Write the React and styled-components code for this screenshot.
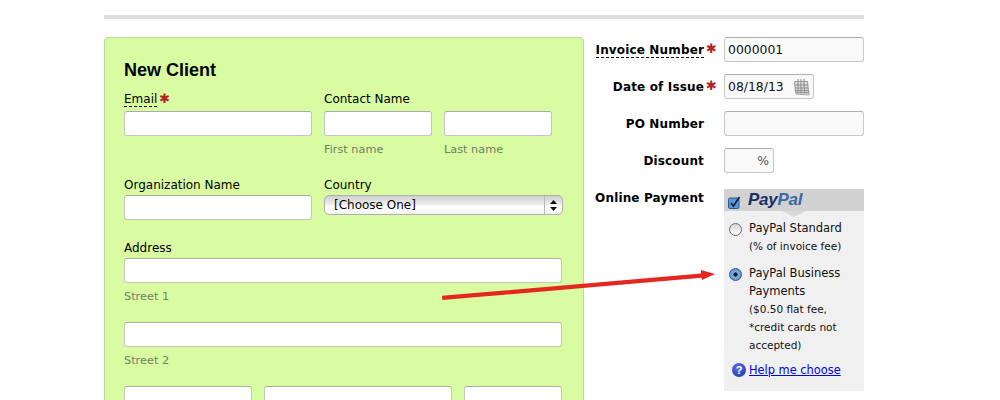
import React from "react";
import styled, { createGlobalStyle } from "styled-components";

const Global = createGlobalStyle`
  html, body { margin: 0; padding: 0; background: #fff; overflow: hidden; height: 400px; }
  body { font-family: "DejaVu Sans", sans-serif; color: #000; }
`;

const Page = styled.div`
  position: relative;
  width: 760px;
  height: 400px;
  margin-left: 104px;
  padding-top: 15px;
  box-sizing: border-box;
  overflow: hidden;
`;
const Rule = styled.div`
  height: 4px;
  background: #dedede;
  margin-bottom: 18px;
`;
const Columns = styled.div`
  display: flex;
  align-items: flex-start;
`;
const Card = styled.section`
  width: 480px;
  height: 420px;
  box-sizing: border-box;
  flex: none;
  background: #d9fca3;
  border: 1px solid #bfd79a;
  border-radius: 4px;
  padding: 21px 19px 0;
`;
const Title = styled.h2`
  margin: 0 0 11px;
  font: bold 18px/22px "Liberation Sans", sans-serif;
`;
const Row = styled.div`
  display: flex;
  gap: 12px;
  margin-bottom: ${(p) => p.$mb ?? 0}px;
`;
const Field = styled.div`
  display: flex;
  flex-direction: column;
  flex: none;
  width: ${(p) => p.$w}px;
`;
const Label = styled.label`
  display: block;
  font-size: 12px;
  line-height: 14px;
  height: 15px;
  margin-bottom: ${(p) => p.$mb ?? 2}px;
  white-space: nowrap;
`;
const Dashed = styled.span`
  border-bottom: 1px dashed #000;
`;
const Star = styled.span`
  color: #b3201f;
  font-size: 13px;
  line-height: 12px;
  margin-left: 2px;
`;
const TextBox = styled.div`
  box-sizing: border-box;
  width: ${(p) => (p.$w ? `${p.$w}px` : "100%")};
  height: 25px;
  flex: none;
  background: #fff;
  border: 1px solid #c4c4c4;
  border-top-color: #a9a9a9;
  border-radius: 3px;
`;
const Hint = styled.div`
  font-size: 11.3px;
  line-height: 14px;
  color: #6f7f60;
  margin-top: 7px;
  height: 14px;
`;
const Pair = styled.div`
  display: flex;
  gap: 12px;
`;
const SelectBox = styled.div`
  box-sizing: border-box;
  width: 239px;
  height: 20px;
  display: flex;
  align-items: center;
  border: 1px solid #b0b0b0;
  border-radius: 5px;
  background: linear-gradient(#cfcfcf 0%, #ececec 45%, #fff 60%, #f4f4f4 100%);
  font-size: 12px;
`;
const SelectValue = styled.span`
  flex: 1;
  padding-left: 9px;
`;
const SelectArrows = styled.span`
  width: 17px;
  height: 18px;
  border-left: 1px solid #b8b8b8;
  display: flex;
  align-items: center;
  justify-content: center;
`;
const Side = styled.aside`
  width: 280px;
  flex: none;
`;
const SideRow = styled.div`
  display: flex;
  align-items: ${(p) => (p.$top ? "flex-start" : "center")};
  height: ${(p) => p.$h ?? 25}px;
  margin-bottom: ${(p) => p.$mb ?? 12}px;
`;
const SideLabel = styled.div`
  width: 120px;
  margin-right: 20px;
  padding-top: 2px;
  flex: none;
  position: relative;
  text-align: right;
  font-size: 12px;
  font-weight: bold;
  letter-spacing: 0.15px;
  line-height: 15px;
  white-space: nowrap;
`;
const SideStar = styled.span`
  position: absolute;
  left: 122px;
  top: 0;
  color: #b3201f;
  font-size: 13px;
  font-weight: normal;
  line-height: 15px;
`;
const SideBox = styled.div`
  box-sizing: border-box;
  width: ${(p) => p.$w}px;
  height: 25px;
  background: #f9f9f9;
  border: 1px solid #c8c8c8;
  border-top-color: #acacac;
  border-radius: 3px;
  display: flex;
  align-items: center;
  justify-content: ${(p) => (p.$end ? "flex-end" : "space-between")};
  padding: 0 3px;
  font-size: 12.4px;
  color: #111;
`;
const Percent = styled.span`
  color: #555;
  padding-right: 1px;
`;
const Pay = styled.div`
  width: 140px;
  height: 202px;
  background: #f0f0f0;
  flex: none;
`;
const PayHead = styled.div`
  position: relative;
  height: 22px;
  background: #d2d2d2;
  display: flex;
  align-items: center;
  padding-left: 4px;
  gap: 7px;
  &::after {
    content: "";
    position: absolute;
    left: 58px;
    top: 22px;
    border-left: 12px solid transparent;
    border-right: 12px solid transparent;
    border-top: 6px solid #d8d8d8;
  }
`;
const Check = styled.span`
  width: 13px;
  height: 13px;
  display: block;
`;
const Logo = styled.span`
  font: italic bold 17px/20px "Liberation Sans", sans-serif;
  color: #1a2f66;
  letter-spacing: -0.25px;
  & > b { color: #3a6aa6; }
`;
const Options = styled.div`
  padding: 8px 0 0 5px;
`;
const Option = styled.div`
  display: flex;
  gap: 8px;
  margin-bottom: 9px;
`;
const Radio = styled.span`
  flex: none;
  box-sizing: border-box;
  width: 13px;
  height: 13px;
  margin-top: 4px;
  margin-right: -1px;
  border-radius: 50%;
  border: 1.5px solid ${(p) => (p.$on ? "#34587f" : "#6e6e6e")};
  background: ${(p) =>
    p.$on
      ? "radial-gradient(circle, #0c1d36 0 1.8px, #7fb0e4 2.4px, #4a85c6 100%)"
      : "linear-gradient(#d4d4d4, #fff)"};
`;
const OptionText = styled.div`
  font-size: 11.5px;
  line-height: 18px;
  color: #111;
`;
const Small = styled.div`
  font-size: 10.5px;
`;
const Help = styled.div`
  display: flex;
  align-items: center;
  gap: 3px;
  margin: 3px 0 0 8px;
  font-size: 11.4px;
`;
const HelpIcon = styled.span`
  width: 14px;
  height: 14px;
  border-radius: 50%;
  background: radial-gradient(circle at 40% 30%, #5a70e0, #1c2fa0);
  color: #fff;
  font: bold 11px/14px "Liberation Sans", sans-serif;
  text-align: center;
  flex: none;
`;
const HelpLink = styled.a`
  color: #0000ee;
  text-decoration: underline;
  cursor: pointer;
`;
const Arrow = styled.svg`
  position: absolute;
  left: 0;
  top: 0;
  pointer-events: none;
`;

const CalendarIcon = () => (
  <svg width="17" height="18" viewBox="0 0 17 18" fill="none">
    <path d="M3 12.5 L3 16 L16 17 L16 13" fill="#c9c9c9" stroke="#aaa" />
    <path d="M1.5 3.5 H14.5 L15.5 14.5 H2.5 Z" fill="#dedede" stroke="#9a9a9a" />
    <path d="M5 1v4M8 1v4M11 1v4M2 7h13M2.2 10h13.1M2.4 12.6h13M5 5v9.5M8 5v9.5M11 5l.6 9.5" stroke="#8d8d8d" />
  </svg>
);

export default function App() {
  return (
    <Page>
      <Global />
      <Rule />
      <Columns>
        <Card>
          <Title>New Client</Title>
          <Row $mb={21}>
            <Field $w={188}>
              <Label $mb={4}><Dashed>Email</Dashed><Star>✱</Star></Label>
              <TextBox />
            </Field>
            <Field $w={228}>
              <Label $mb={4}>Contact Name</Label>
              <Pair>
                <Field $w={108}><TextBox /><Hint>First name</Hint></Field>
                <Field $w={108}><TextBox /><Hint>Last name</Hint></Field>
              </Pair>
            </Field>
          </Row>
          <Row $mb={21}>
            <Field $w={188}>
              <Label>Organization Name</Label>
              <TextBox />
            </Field>
            <Field $w={239}>
              <Label>Country</Label>
              <SelectBox>
                <SelectValue>[Choose One]</SelectValue>
                <SelectArrows>
                  <svg width="7" height="11" viewBox="0 0 7 11">
                    <path d="M3.5 0 7 4H0ZM3.5 11 0 7h7Z" fill="#111" />
                  </svg>
                </SelectArrows>
              </SelectBox>
            </Field>
          </Row>
          <Row $mb={18}>
            <Field $w={438}>
              <Label>Address</Label>
              <TextBox />
              <Hint>Street 1</Hint>
            </Field>
          </Row>
          <Row $mb={18}>
            <Field $w={438}>
              <TextBox />
              <Hint>Street 2</Hint>
            </Field>
          </Row>
          <Row>
            <TextBox $w={128} />
            <TextBox $w={188} />
            <TextBox $w={98} />
          </Row>
        </Card>
        <Side>
          <SideRow>
            <SideLabel><Dashed>Invoice Number</Dashed><SideStar>✱</SideStar></SideLabel>
            <SideBox $w={140}>0000001</SideBox>
          </SideRow>
          <SideRow>
            <SideLabel>Date of Issue<SideStar>✱</SideStar></SideLabel>
            <SideBox $w={90}>08/18/13<CalendarIcon /></SideBox>
          </SideRow>
          <SideRow>
            <SideLabel>PO Number</SideLabel>
            <SideBox $w={140} />
          </SideRow>
          <SideRow $mb={16}>
            <SideLabel>Discount</SideLabel>
            <SideBox $w={50} $end><Percent>%</Percent></SideBox>
          </SideRow>
          <SideRow $top $h={202}>
            <SideLabel>Online Payment</SideLabel>
            <Pay>
              <PayHead>
                <Check>
                  <svg width="13" height="13" viewBox="0 0 13 13">
                    <rect x="0.5" y="2" width="10.5" height="10.5" rx="1.5" fill="#5b97dc" stroke="#2c5688" />
                    <path d="M3 7l2.4 3L11.5 1" fill="none" stroke="#14233a" strokeWidth="1.7" />
                  </svg>
                </Check>
                <Logo>Pay<b>Pal</b></Logo>
              </PayHead>
              <Options>
                <Option>
                  <Radio />
                  <OptionText>PayPal Standard<Small>(% of invoice fee)</Small></OptionText>
                </Option>
                <Option>
                  <Radio $on />
                  <OptionText>
                    PayPal Business Payments
                    <Small>($0.50 flat fee,</Small>
                    <Small>*credit cards not</Small>
                    <Small>accepted)</Small>
                  </OptionText>
                </Option>
              </Options>
              <Help>
                <HelpIcon>?</HelpIcon>
                <HelpLink>Help me choose</HelpLink>
              </Help>
            </Pay>
          </SideRow>
        </Side>
      </Columns>
      <Arrow width="760" height="400" viewBox="0 0 760 400">
        <path d="M338 295.8 L597 273.6 L597 270 L611 274 L598 280 L597.6 277.8 L338.4 300 Z" fill="#e42820" />
      </Arrow>
    </Page>
  );
}
